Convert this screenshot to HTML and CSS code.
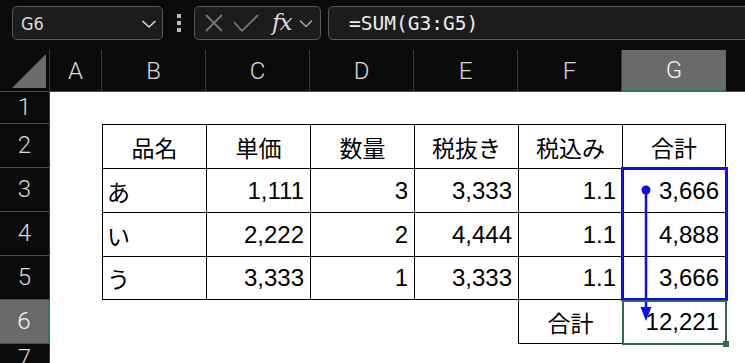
FILE: index.html
```html
<!DOCTYPE html>
<html lang="ja">
<head>
    <meta charset="UTF-8">
    <meta name="viewport" content="width=device-width, initial-scale=1">
    <title>SUM</title>
    <link rel="stylesheet" href="styles.css">
</head>
<body>

<div class="toolbar">
    <div class="namebox">
        <span>G6</span>
        <svg class="chev" width="16" height="10" viewBox="0 0 16 10"><path d="M1.5 2 L8 8 L14.5 2" fill="none" stroke="#d8d8d8" stroke-width="1.6"/></svg>
    </div>
    <div class="dots">
        <svg width="6" height="18" viewBox="0 0 6 18"><rect x="1" y="0" width="4" height="4" fill="#bdbdbd"/><rect x="1" y="7" width="4" height="4" fill="#bdbdbd"/><rect x="1" y="14" width="4" height="4" fill="#bdbdbd"/></svg>
    </div>
    <div class="fxbox">
        <svg width="20" height="20" viewBox="0 0 20 20"><path d="M2 2 L18 18 M18 2 L2 18" stroke="#767676" stroke-width="1.8" fill="none"/></svg>
        <svg width="28" height="20" viewBox="0 0 28 20"><path d="M2 9 L10 18 L26 2" stroke="#767676" stroke-width="1.8" fill="none"/></svg>
        <span class="fx">fx</span>
        <svg width="14" height="9" viewBox="0 0 14 9"><path d="M1 1.5 L7 7.5 L13 1.5" fill="none" stroke="#a8a8a8" stroke-width="1.4"/></svg>
    </div>
    <div class="formula">=SUM(G3:G5)</div>
</div>

<div class="sheet">
    <div class="corner"><svg width="34" height="34" viewBox="0 0 34 34"><polygon points="34,0 34,34 0,34" fill="#6b6b6b"/></svg></div>
    <div class="colhead">A</div>
    <div class="colhead">B</div>
    <div class="colhead">C</div>
    <div class="colhead">D</div>
    <div class="colhead">E</div>
    <div class="colhead">F</div>
    <div class="colhead sel">G</div>
    <div class="colhead rest"></div>

    <div class="rowhead">1</div>
    <div></div><div></div><div></div><div></div><div></div><div></div><div></div><div></div>

    <div class="rowhead">2</div>
    <div></div>
    <div class="t top th">品名</div>
    <div class="t top th">単価</div>
    <div class="t top th">数量</div>
    <div class="t top th">税抜き</div>
    <div class="t top th">税込み</div>
    <div class="t top th end">合計</div>
    <div></div>

    <div class="rowhead">3</div>
    <div></div>
    <div class="t jp">あ</div>
    <div class="t num">1,111</div>
    <div class="t num">3</div>
    <div class="t num">3,333</div>
    <div class="t num">1.1</div>
    <div class="t num end">3,666</div>
    <div></div>

    <div class="rowhead">4</div>
    <div></div>
    <div class="t jp">い</div>
    <div class="t num">2,222</div>
    <div class="t num">2</div>
    <div class="t num">4,444</div>
    <div class="t num">1.1</div>
    <div class="t num end">4,888</div>
    <div></div>

    <div class="rowhead">5</div>
    <div></div>
    <div class="t bottom jp">う</div>
    <div class="t bottom num">3,333</div>
    <div class="t bottom num">1</div>
    <div class="t bottom num">3,333</div>
    <div class="t bottom num">1.1</div>
    <div class="t bottom num end">3,666</div>
    <div></div>

    <div class="rowhead sel">6</div>
    <div></div><div></div><div></div><div></div><div></div>
    <div class="t bottom th notop">合計</div>
    <div class="t bottom num notop end">12,221</div>
    <div></div>

    <div class="rowhead">7</div>
    <div></div><div></div><div></div><div></div><div></div><div></div><div></div><div></div>
</div>

<!-- selection range, trace arrow and active cell drawn over the grid -->
<svg class="overlay" width="745" height="363" viewBox="0 0 745 363">
    <rect x="622.5" y="168.5" width="104" height="131" fill="none" stroke="#0b0bf5" stroke-width="3"/>
    <circle cx="646" cy="190" r="4.5" fill="#0b0bf5"/>
    <line x1="646" y1="190" x2="646" y2="310" stroke="#0b0bf5" stroke-width="2.5"/>
    <polygon points="640.5,307 651.5,307 646,321" fill="#0b0bf5"/>
    <rect x="623" y="301" width="103" height="43" fill="none" stroke="#2f6f48" stroke-width="2"/>
    <rect x="723" y="341" width="6" height="6" fill="#2f6f48"/>
</svg>

</body>
</html>
```

FILE: styles.css
```css
* {
    box-sizing: border-box;
}

body {
    margin: 0;
    width: 745px;
    height: 363px;
    overflow: hidden;
    background-color: #0a0a0a;
    font-family: 'Liberation Sans', 'Noto Sans CJK JP', sans-serif;
    position: relative;
}

/* barra de fórmulas */
.toolbar {
    display: flex;
    height: 50px;
    padding: 6px 0 10px 12px;
}

.namebox, .fxbox, .formula {
    height: 34px;
    border: 1px solid #575757;
    border-radius: 5px;
    background-color: #1c1c1c;
    display: flex;
    align-items: center;
}

.namebox {
    width: 151px;
    padding: 0 5px 0 8px;
    justify-content: space-between;
    color: #dcdcdc;
    font-family: 'DejaVu Sans', sans-serif;
    font-stretch: condensed;
    font-size: 18px;
}

.chev {
    margin-top: 1px;
}

.dots {
    width: 31px;
    display: flex;
    align-items: center;
    justify-content: center;
}

.fxbox {
    width: 127px;
    padding: 0 4px 0 9px;
    gap: 8px;
}

.fx {
    font-family: 'DejaVu Serif', 'Liberation Serif', serif;
    font-style: italic;
    font-size: 23px;
    color: #dadada;
    margin: -3px 0 0 4px;
    letter-spacing: -1px;
}

.formula {
    flex: 1;
    margin-left: 7px;
    margin-right: -10px;
    padding-left: 20px;
    color: #ececec;
    font-family: 'DejaVu Sans Mono', 'Liberation Mono', monospace;
    font-size: 19.5px;
}

/* planilha */
.sheet {
    display: grid;
    grid-template-columns: 50px 52px repeat(6, 104px) 1fr;
    grid-template-rows: 42px 32px repeat(5, 44px) 1fr;
    height: 313px;
    background-color: #fff;
}

.corner, .colhead, .rowhead {
    background-color: #0a0a0a;
    color: #dadada;
    font-family: Roboto, 'Open Sans', sans-serif;
    font-weight: 300;
    font-size: 24px;
    display: flex;
    align-items: center;
    justify-content: center;
}

.corner {
    border-right: 1px solid #3c3c3c;
    border-bottom: 1px solid #4a4a4a;
    justify-content: flex-end;
    align-items: flex-end;
    padding: 0 3px 3px 0;
}

.colhead {
    border-right: 1px solid #3c3c3c;
    border-bottom: 1px solid #4a4a4a;
}

.colhead.rest {
    border-right: none;
}

.colhead.sel {
    background-color: #6a6a6a;
    color: #f4f4f4;
    border-bottom: 2px solid #2f7a50;
    border-right: none;
}

.rowhead {
    border-right: 1px solid #3c3c3c;
    border-bottom: 1px solid #4a4a4a;
    padding-bottom: 2px;
}

.rowhead.sel {
    background-color: #6a6a6a;
    color: #f4f4f4;
    border-right: 2px solid #2f7a50;
}

/* tabela */
.t {
    border-left: 1px solid #000;
    border-top: 1px solid #000;
    display: flex;
    align-items: center;
    padding: 0 6px;
    color: #000;
    font-size: 24px;
}

.t.notop {
    border-top: none;
}

.t.end {
    border-right: 1px solid #000;
}

.t.bottom {
    border-bottom: 1px solid #000;
}

.th {
    justify-content: center;
    font-size: 23px;
}

.jp {
    font-size: 23px;
    padding-left: 4px;
}

.num {
    justify-content: flex-end;
}

.overlay {
    position: absolute;
    top: 0;
    left: 0;
    pointer-events: none;
}
```
